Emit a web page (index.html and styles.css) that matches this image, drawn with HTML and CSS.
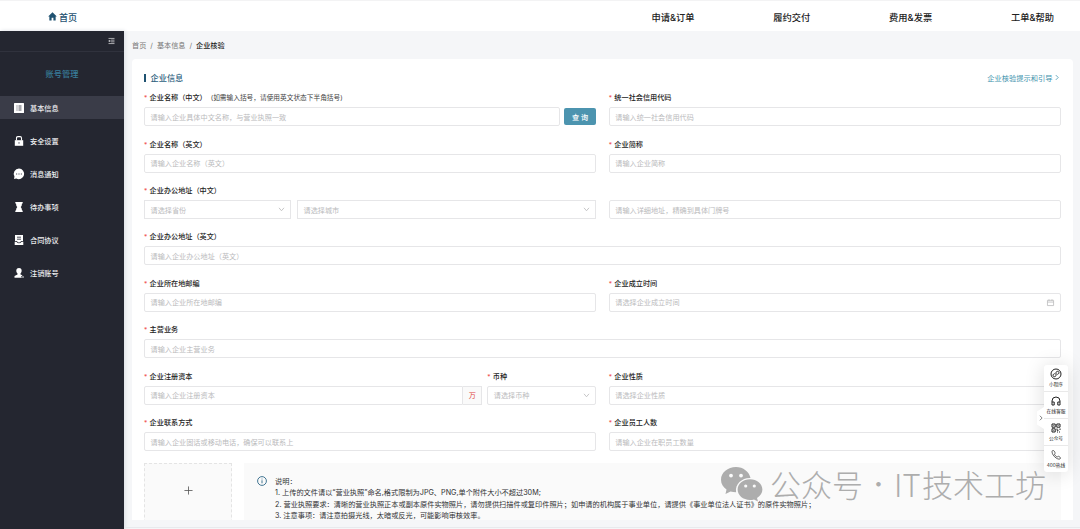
FILE: index.html
```html
<!DOCTYPE html>
<html lang="zh-CN">
<head>
<meta charset="utf-8">
<title>企业核验</title>
<link rel="stylesheet" href="styles.css">
</head>
<body>
<header class="topbar">
  <div class="home"><svg viewBox="0 0 10 10"><path d="M5 .3 9.800 5H8.500v4.500H6V6.400H4v3.100H1.500V5H.2z"/></svg><span>首页</span></div>
  <nav class="topnav"><span>申请&amp;订单</span><span>履约交付</span><span>费用&amp;发票</span><span>工单&amp;帮助</span></nav>
</header>
<div class="shell">
  <aside class="sidebar">
    <div class="collapse"><svg viewBox="0 0 8 7"><path d="M.5.5h7M3.500 2.500h4M3.500 4.500h4M.5 6.500h7M2.200 2.500.7 3.500l1.500 1z"/></svg></div>
    <div class="side-title">账号管理</div>
    <div class="side-item active"><svg viewBox="0 0 10 10"><rect width="10" height="10" rx=".5"/><path class="cut" d="M2.500 3h1M4.500 3h3M2.500 5h1M4.500 5h3M2.500 7h1M4.500 7h3"/></svg><span>基本信息</span></div>
    <div class="side-item"><svg viewBox="0 0 10 10"><path d="M.8 4.200h8.400v5.600H.8z"/><path class="line" d="M2.500 4.500V2Q2.500.6 3.900.6h2.200Q7.500.6 7.500 2v2.500"/><path class="cut" d="M5 6.200v1.500"/></svg><span>安全设置</span></div>
    <div class="side-item"><svg class="wide" viewBox="0 0 10 10"><path d="M5 0a4.900 4.900 0 1 1-2.500 9.200L.4 9.700l.4-2.300A4.900 4.900 0 0 1 5 0z"/><path class="cut" d="M2.300 5h1M4.500 5h1M6.700 5h1"/></svg><span>消息通知</span></div>
    <div class="side-item"><svg viewBox="0 0 10 10"><path d="M1.300 0h7.400v1.500H8Q8 3.800 6.700 5 8 6.200 8 8.500h.7V10H1.300V8.500H2Q2 6.200 3.300 5 2 3.800 2 1.500h-.7z"/></svg><span>待办事项</span></div>
    <div class="side-item"><svg viewBox="0 0 10 10"><path d="M1 0h8v6H7Q6.700 7.500 5 7.500T3 6H1zM.7 6.800h1.800Q3.200 8.300 5 8.300t2.500-1.500h1.800V10H.7z"/><path class="cut" d="M3 2.200h4M3 4.200h4"/></svg><span>合同协议</span></div>
    <div class="side-item"><svg viewBox="0 0 10 10"><path d="M5 0c3.200 0 3.300 3.600 1.500 5.600v.8l2 .8-1.400 1.200.8 1.300H.5V8l3-1.600v-.8C1.700 3.600 1.800 0 5 0z"/><circle cx="9" cy="9" r=".8"/></svg><span>注销账号</span></div>
  </aside>
  <main class="main">
    <div class="crumbs"><span>首页</span><i>/</i><span>基本信息</span><i>/</i><b>企业核验</b></div>
    <section class="card">
      <div class="card-head"><h2>企业信息</h2><a>企业核验提示和引导<svg viewBox="0 0 5 8"><path d="M1 1l3 3-3 3"/></svg></a></div>
      <div class="row">
        <div class="field"><label>企业名称（中文）<small>(如需输入括号，请使用英文状态下半角括号)</small></label><div class="pair"><div class="input">请输入企业具体中文名称，与营业执照一致</div><button class="query">查 询</button></div></div>
        <div class="field"><label>统一社会信用代码</label><div class="input">请输入统一社会信用代码</div></div>
      </div>
      <div class="row">
        <div class="field"><label>企业名称（英文）</label><div class="input">请输入企业名称（英文）</div></div>
        <div class="field"><label>企业简称</label><div class="input">请输入企业简称</div></div>
      </div>
      <div class="row">
        <div class="field"><label>企业办公地址（中文）</label><div class="pair region">
          <div class="input square province">请选择省份<svg class="chev" viewBox="0 0 8 6"><path d="M1 1l3 3.500L7 1"/></svg></div>
          <div class="input square">请选择城市<svg class="chev" viewBox="0 0 8 6"><path d="M1 1l3 3.500L7 1"/></svg></div></div></div>
        <div class="field detail"><div class="input">请输入详细地址，精确到具体门牌号</div></div>
      </div>
      <div class="row"><div class="field"><label>企业办公地址（英文）</label><div class="input">请输入企业办公地址（英文）</div></div></div>
      <div class="row">
        <div class="field"><label>企业所在地邮编</label><div class="input">请输入企业所在地邮编</div></div>
        <div class="field"><label>企业成立时间</label><div class="input">请选择企业成立时间<svg class="cal" viewBox="0 0 8 8"><path d="M.5 1.500h7v6h-7zM.5 3.500h7M2.300.3v2M5.700.3v2"/></svg></div></div>
      </div>
      <div class="row"><div class="field"><label>主营业务</label><div class="input">请输入企业主营业务</div></div></div>
      <div class="row">
        <div class="split">
          <div class="field"><label>企业注册资本</label><div class="pair joined"><div class="input">请输入企业注册资本</div><div class="unit">万</div></div></div>
          <div class="field currency"><label>币种</label><div class="input">请选择币种<svg class="chev" viewBox="0 0 8 6"><path d="M1 1l3 3.500L7 1"/></svg></div></div>
        </div>
        <div class="field"><label>企业性质</label><div class="input">请选择企业性质</div></div>
      </div>
      <div class="row">
        <div class="field"><label>企业联系方式</label><div class="input">请输入企业固话或移动电话，确保可以联系上</div></div>
        <div class="field"><label>企业员工人数</label><div class="input">请输入企业在职员工数量</div></div>
      </div>
      <div class="upload-row">
        <div class="upload"><svg viewBox="0 0 10 10"><path d="M5 .5v9M.5 5h9"/></svg></div>
        <div class="notice">
          <svg viewBox="0 0 10 10"><circle cx="5" cy="5" r="4.400"/><path d="M5 4.300v3M5 2.600v.8"/></svg>
          <div class="notice-text">
            <p>说明：</p>
            <p>1. 上传的文件请以“营业执照”命名,格式限制为JPG、PNG,单个附件大小不超过30M;</p>
            <p>2. 营业执照要求：清晰的营业执照正本或副本原件实物照片，请勿提供扫描件或复印件照片；如申请的机构属于事业单位，请提供《事业单位法人证书》的原件实物照片；</p>
            <p>3. 注意事项：请注意拍摄光线，太暗或反光，可能影响审核效率。</p>
          </div>
        </div>
      </div>
    </section>
  </main>
</div>
<div class="watermark">
  <svg viewBox="0 0 42 34"><path d="M15 0C6.700 0 0 5.600 0 12.700c0 4 2.100 7.400 5.500 9.800L4.500 27l5-2.600c1.800.5 3.600.8 5.600.8C13.800 17 21 10.700 29.500 11 28.200 4.700 22.200 0 15 0z"/><path d="M29 12.200c-6.900 0-12.400 4.600-12.400 10.400S22.100 33 29 33c1.400 0 2.800-.2 4-.6l4 2.100-1-3.600c3.300-1.900 5.400-4.900 5.400-8.300 0-5.800-5.500-10.400-12.400-10.400z"/><g class="eyes"><circle cx="10" cy="8.600" r="1.900"/><circle cx="20" cy="8.600" r="1.900"/><circle cx="24.700" cy="19" r="1.600"/><circle cx="33.300" cy="19" r="1.600"/></g></svg>
  <span>公众号</span><span class="wm-dot">·</span><span class="wm-it">IT</span><span>技术工坊</span>
</div>
<div class="float">
  <div class="handle"><svg viewBox="0 0 5 8"><path d="M1 1l3 3-3 3"/></svg></div>
  <div class="float-item"><svg viewBox="0 0 12 12"><circle cx="6" cy="6" r="5"/><path d="M4.700 5.600C2.500 6 2.600 8.700 4.400 8.700 5.500 8.700 6 8 6 7.200V4.800c0-.8.6-1.500 1.600-1.500 1.800 0 1.900 2.700-.3 3.100"/></svg><span>小程序</span></div>
  <div class="float-item"><svg viewBox="0 0 12 12"><path d="M2 10V6a4 4 0 0 1 8 0v4H7.800V7H10M2 7h2.200v3H2"/></svg><span>在线客服</span></div>
  <div class="float-item"><svg viewBox="0 0 12 12"><path d="M2 2h3.200v3.200H2zM6.800 2H10v3.200H6.800zM2 6.800h3.200V10H2zM7 6.500v1.800h1.500M10 6.500v1.500M7 10h1M9.500 9.500v1M3.600 3.300v.6M8.400 3.300v.6M3.600 8.100v.6"/></svg><span>公众号</span></div>
  <div class="float-item"><svg class="thin" viewBox="0 0 12 12"><path d="M2.300 1.800C1.500 2.500 2.300 5.500 4.500 7.700S9.200 10.600 10 9.900s.6-1.300 0-1.700l-1.300-.8c-.6-.3-1 .2-1.500.6C6 7.500 4.800 6.300 4.400 5.100c.5-.4.9-.8.6-1.500l-.8-1.500c-.4-.6-1.200-.9-1.900-.3z"/></svg><span>400热线</span></div>
</div>
</body>
</html>
```
FILE: styles.css
```css
* { box-sizing: border-box; }
body { margin: 0; width: 1080px; height: 529px; overflow: hidden; position: relative; background: #f5f6f8; font-family: Inter, "Noto Sans CJK SC", sans-serif; font-size: 7.15px; color: #303133; }
svg { display: block; flex: none; fill: none; stroke: currentColor; overflow: visible; }
.topbar { height: 31px; background: #fff; border-top: 1px solid #f3f3f4; display: flex; justify-content: space-between; align-items: center; padding: 1px 26px 0 47.500px; font-size: 9.1px; font-weight: 500; color: #222; }
.home { display: flex; align-items: center; gap: 2.500px; color: #1f5271; }
.home svg { width: 9px; height: 9px; fill: currentColor; stroke: none; }
.topnav { display: flex; gap: 78.800px; font-size: 9.25px; }
.shell { display: flex; height: 498px; }
.sidebar { width: 124px; background: #242630; color: #eeeff1; flex: none; box-shadow: 1px 0 4px #d9dde3; }
.collapse { height: 21px; border-bottom: 1px solid #30323d; display: flex; justify-content: flex-end; padding: 7px 9px 0; }
.collapse svg { width: 7px; height: 6px; color: #d0d1d4; stroke-width: 0.9; }
.side-title { height: 44px; line-height: 45px; text-align: center; font-size: 8.2px; color: #387d99; font-weight: 500; }
.side-item { height: 23px; margin-bottom: 10.05px; padding: 0 0 0 13.5px; display: flex; align-items: center; gap: 6.500px; font-weight: 500; }
.side-item.active { background: #3a3c48; }
.side-item svg { width: 10px; height: 10px; fill: #fff; stroke: none; }
.side-item svg.wide { transform: scale(1.08); }
.side-item .cut { stroke: #3a3c48; fill: none; stroke-width: 0.9; }
.side-item .line { stroke: #fff; fill: none; stroke-width: 1.1; }
.main { flex: 1; height: 497px; padding: 0 7px 0 8px; border-bottom: 1px solid #e8eaed; }
.crumbs { height: 28px; display: flex; align-items: center; gap: 4px; color: #777; }
.crumbs i { font-style: normal; }
.crumbs b { font-weight: 500; color: #222; }
.card { height: 461px; overflow: hidden; background: #fff; border-radius: 4px 4px 0 0; padding: 4px 12px 0; }
.card-head { height: 29.300px; display: flex; align-items: center; justify-content: space-between; }
.card-head h2 { margin: 0; font-size: 8.2px; font-weight: 500; line-height: 8px; border-left: 2.5px solid #1f5271; padding-left: 4.500px; color: #2d617e; }
.card-head a { display: flex; align-items: center; gap: 2px; color: #4394ae; padding-right: 2.500px; font-size: 7.25px; }
.card-head svg { width: 4px; height: 7px; }
.row { height: 46.4px; display: grid; grid-auto-flow: column; grid-auto-columns: minmax(0, 1fr); gap: 12.500px; }
.field { display: flex; flex-direction: column; gap: 3px; min-width: 0; }
.field label { height: 12px; line-height: 12px; font-weight: 500; color: #222; white-space: nowrap; }
.field label::before { content: "*"; display: inline-block; width: 5.600px; color: #f0504d; font-size: 6.500px; font-weight: 400; }
.field small { font-size: 6.700px; font-weight: 400; color: #444; margin-left: 4px; }
.input { flex: 1; height: 19px; max-height: 19px; min-height: 19px; border: 1px solid #e6e6e8; border-radius: 2px; padding: 0 6px 0 5.500px; display: flex; align-items: center; justify-content: space-between; color: #bababc; white-space: nowrap; }
.square { border-radius: 0; }
.chev { width: 7px; height: 5px; stroke-width: 1; margin-right: -1px; }
.cal { width: 7px; height: 7px; stroke-width: 0.9; }
.pair { display: flex; gap: 4px; }
.region { gap: 6px; }
.province { flex: 0 0 147px; }
.detail { padding-top: 15px; }
.query { width: 32.500px; height: 17px; margin-top: 1px; border: 0; border-radius: 2px; padding: 0; background: #4c94af; color: #fff; font: 500 7.15px Inter, "Noto Sans CJK SC", sans-serif; }
.split { display: flex; gap: 5px; }
.split .field { flex: 1; }
.split .currency { flex: 0 0 109px; }
.joined { gap: 0; }
.joined .input { border-radius: 2px 0 0 2px; }
.unit { width: 19px; height: 19px; border: 1px solid #e6e6e8; border-left: 0; background: #fafafa; color: #e0443f; display: flex; align-items: center; justify-content: center; }
.upload-row { display: flex; gap: 12px; height: 70px; }
.upload { width: 88px; background: #fafafa; border: 1px dashed #e4e4e4; display: flex; justify-content: center; padding-top: 22px; color: #555; }
.upload svg { width: 9px; height: 9px; stroke-width: 0.9; }
.notice { flex: 1; background: #fafafa; display: flex; gap: 8.500px; padding: 13px 12.500px; }
.notice svg { width: 10px; height: 10px; color: #2e6687; stroke-width: 0.9; }
.notice p { margin: 0; line-height: 11.300px; white-space: nowrap; color: #303133; font-size: 7.19px; }
.notice-text { margin-top: -0.300px; }
.watermark { position: absolute; left: 721px; top: 465px; height: 37px; display: flex; align-items: center; color: #adadad; font-family: "Noto Sans CJK SC", sans-serif; font-weight: 300; font-size: 31px; line-height: 37px; white-space: nowrap; }
.watermark svg { width: 42px; height: 34px; fill: #adadad; stroke: none; margin-right: 7px; }
.watermark .eyes { fill: #fafafa; }
.wm-dot { width: 31px; text-align: center; font-family: Inter, sans-serif; font-weight: 500; }
.wm-it { width: 28px; }
.float { position: absolute; left: 1044px; top: 365px; width: 24px; height: 107px; background: #fff; border-radius: 3px; box-shadow: 0 1px 20px rgba(0, 0, 0, 0.14); }
.float-item { height: 27px; display: flex; flex-direction: column; align-items: center; padding-top: 2.500px; font-size: 4.700px; line-height: 7px; gap: 1px; border-bottom: 1px solid #e9e9e9; color: #222; white-space: nowrap; }
.float-item:last-child { border-bottom: 0; }
.float-item svg { width: 12px; height: 12px; }
.float-item svg.thin { stroke-width: 0.7; }
.handle { position: absolute; left: -7px; top: 42px; width: 7px; height: 22px; background: #fff; clip-path: polygon(100% 0, 0 20%, 0 80%, 100% 100%); display: flex; align-items: center; justify-content: center; color: #444; }
.handle svg { width: 4px; height: 6px; stroke-width: 0.9; }
```
